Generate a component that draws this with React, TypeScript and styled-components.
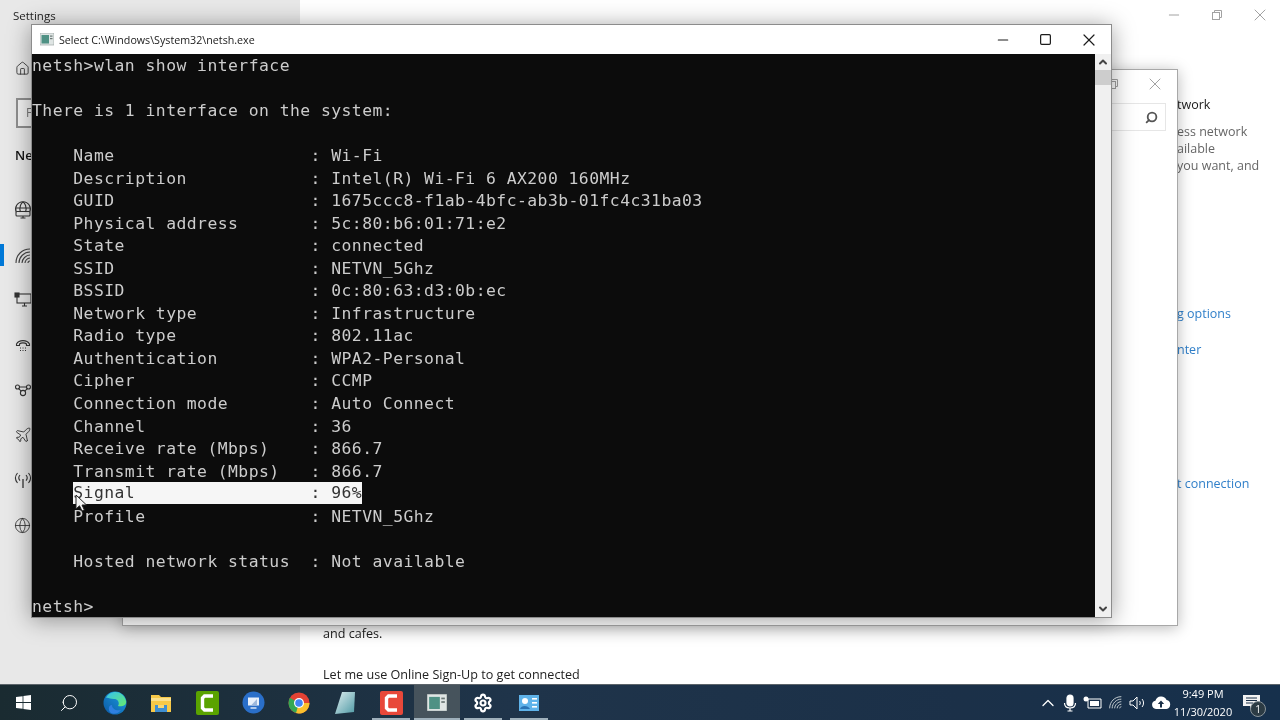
import React from 'react';
import styled, { createGlobalStyle } from 'styled-components';
import { Search, Settings as SettingsGlyph, Plane, Globe, Home, ChevronUp, Minus, Square, X } from 'lucide-react';

const GlobalStyle = createGlobalStyle`
  html, body {
    margin: 0;
    padding: 0;
    background: #fff;
    overflow: hidden;
  }
  * { box-sizing: border-box; }
`;

const uiFont = `"Open Sans", "Noto Sans", "Liberation Sans", sans-serif`;

const Desktop = styled.div`
  position: relative;
  width: 1280px;
  height: 720px;
  overflow: hidden;
  display: flex;
  flex-direction: column;
  font-family: ${uiFont};
  filter: blur(0.35px);
`;

/* settings window behind everything */
const SettingsWindow = styled.div`
  flex: 1;
  display: flex;
  min-height: 0;
  background: #fff;
`;

const Sidebar = styled.aside`
  width: 300px;
  background: #e8e8e8;
  display: flex;
  flex-direction: column;
`;

const AppTitle = styled.div`
  padding: 8px 0 0 13px;
  height: 52px;
  font-size: 11.5px;
  color: #222;
`;

const SideIconRow = styled.div<{ $active?: boolean; $nudge?: number }>`
  position: relative;
  height: 45px;
  display: flex;
  align-items: center;
  padding-left: 14px;
  padding-top: ${({ $nudge }) => $nudge ?? 0}px;
  color: #333;
  &::before {
    content: '';
    display: ${({ $active }) => ($active ? 'block' : 'none')};
    position: absolute;
    left: 0;
    top: 12px;
    width: 4px;
    height: 22px;
    background: #0078d7;
  }
`;

const HomeRow = styled(SideIconRow)`
  height: 32px;
  padding-left: 15px;
`;

const SearchBox = styled.div`
  margin: 14px 0 0 16px;
  width: 120px;
  height: 30px;
  border: 2px solid #8f8f8f;
  background: #f2f2f2;
  padding-left: 8px;
  font-size: 12px;
  line-height: 26px;
  color: #777;
`;

const SectionHead = styled.div`
  padding: 18px 0 0 15px;
  height: 59px;
  font-size: 13px;
  font-weight: 600;
  color: #111;
`;

const Content = styled.main`
  flex: 1;
  display: flex;
  flex-direction: column;
`;

const WindowControls = styled.div`
  height: 30px;
  display: flex;
  justify-content: flex-end;
  margin-right: -1px;
`;

const ControlSlot = styled.div`
  width: 43px;
  display: flex;
  align-items: center;
  justify-content: center;
  color: #a2a2a2;
`;

const ContentBody = styled.div`
  flex: 1;
  display: flex;
`;

const MainColumn = styled.div`
  width: 877px;
  padding-left: 23px;
  display: flex;
  flex-direction: column;
  justify-content: flex-end;
  gap: 23px;
  font-size: 12.6px;
  line-height: 18px;
  color: #222;
`;

const Rail = styled.div`
  flex: 1;
  display: flex;
  flex-direction: column;
  font-size: 12.5px;
  white-space: nowrap;
`;

const RailLine = styled.div<{ $tone?: 'head' | 'link' | 'body'; $gap?: number }>`
  height: 17px;
  line-height: 17px;
  margin-top: ${({ $gap }) => $gap ?? 0}px;
  color: ${({ $tone }) => ($tone === 'head' ? '#1c1c1c' : $tone === 'link' ? '#2f7fc9' : '#666')};
`;

/* floating windows */
const DialogWindow = styled.div`
  position: absolute;
  left: 122px;
  top: 69px;
  width: 1056px;
  height: 557px;
  background: #fff;
  border: 1px solid #a8a8a8;
  box-shadow: 0 2px 14px rgba(0, 0, 0, 0.28);
  display: flex;
  flex-direction: column;
  align-items: flex-end;
`;

const DialogTop = styled.div`
  display: flex;
  height: 28px;
  padding-right: 1px;
  color: #a2a2a2;
`;

const DialogSlot = styled.div`
  width: 42px;
  display: flex;
  align-items: center;
  justify-content: center;
`;

const DialogSearch = styled.div`
  margin: 5px 11px 0 0;
  width: 100px;
  height: 28px;
  border: 1px solid #e6e6e6;
  display: flex;
  align-items: center;
  justify-content: flex-end;
  padding-right: 7px;
  color: #555;
`;

const ConsoleWindow = styled.div`
  position: absolute;
  left: 31px;
  top: 24px;
  width: 1081px;
  height: 594px;
  background: #fff;
  border: 1px solid #8c8c8c;
  box-shadow: 0 2px 22px rgba(0, 0, 0, 0.38);
  display: flex;
  flex-direction: column;
`;

const ConsoleTitleBar = styled.header`
  height: 29px;
  flex: none;
  display: flex;
  align-items: center;
  padding-left: 8px;
  background: #fff;
`;

const ConsoleTitle = styled.span`
  margin-left: 5px;
  flex: 1;
  font-size: 10.7px;
  color: #1a1a1a;
`;

const TitleButton = styled.div`
  width: 43px;
  height: 100%;
  display: flex;
  align-items: center;
  justify-content: center;
  color: #1c1c1c;
`;

const TitleButtons = styled.div`
  height: 100%;
  display: flex;
  margin-right: 1px;
`;

const ConsoleBody = styled.div`
  flex: 1;
  min-height: 0;
  display: flex;
`;

const Screen = styled.pre`
  flex: 1;
  margin: 0;
  padding-top: 1px;
  background: #0c0c0c;
  color: #cccccc;
  font-family: "DejaVu Sans Mono", "Liberation Mono", monospace;
  font-size: 16.4px;
  letter-spacing: 0.45px;
  overflow: hidden;
`;

const Line = styled.div`
  height: 22.54px;
  line-height: 22.54px;
  white-space: pre;
`;

const Selected = styled.span`
  display: inline-block;
  position: relative;
  top: -1px;
  height: 22px;
  background: #f6f6f6;
  color: #333;
`;

const Scrollbar = styled.div`
  width: 16px;
  background: #f0f0f0;
  display: flex;
  flex-direction: column;
  align-items: center;
  color: #444;
`;

const ScrollArrow = styled.div`
  width: 100%;
  height: 16px;
  display: flex;
  align-items: center;
  justify-content: center;
`;

const ScrollThumb = styled.div`
  width: 100%;
  height: 15px;
  background: #cdcdcd;
  margin-bottom: auto;
`;

const Pointer = styled.svg`
  position: absolute;
  left: 75px;
  top: 494px;
`;

/* taskbar */
const Taskbar = styled.footer`
  height: 36px;
  flex: none;
  display: flex;
  align-items: stretch;
  background: linear-gradient(90deg, #1a2b31 0%, #1f344a 40%, #1b3048 75%, #16304c 100%);
  border-top: 1px solid #5c646a;
`;

const TaskButton = styled.div<{ $active?: boolean; $running?: boolean }>`
  position: relative;
  width: 46px;
  display: flex;
  align-items: center;
  justify-content: center;
  background: ${({ $active }) => ($active ? '#46535c' : 'transparent')};
  color: #fff;
  &::after {
    content: '';
    display: ${({ $running, $active }) => ($running || $active ? 'block' : 'none')};
    position: absolute;
    left: ${({ $active }) => ($active ? '0' : '4px')};
    right: ${({ $active }) => ($active ? '0' : '4px')};
    bottom: 0;
    height: 2px;
    background: #9fb0bb;
  }
`;

const Tray = styled.div`
  margin-left: auto;
  display: flex;
  align-items: center;
  color: #fff;
`;

const TrayIcon = styled.div<{ $w: number }>`
  width: ${({ $w }) => $w}px;
  display: flex;
  align-items: center;
  justify-content: center;
`;

const Clock = styled.div`
  width: 60px;
  margin-right: 7px;
  display: flex;
  flex-direction: column;
  align-items: center;
  font-size: 11px;
  line-height: 18px;
  color: #fff;
`;

const NotifyWrap = styled.div`
  position: relative;
  width: 40px;
  height: 100%;
  display: flex;
  align-items: center;
  padding-left: 3px;
`;

const NotifyBadge = styled.span`
  position: absolute;
  left: 10px;
  top: 16px;
  width: 16px;
  height: 16px;
  border-radius: 50%;
  background: #2c3b44;
  border: 1px solid #8a949a;
  font-size: 10px;
  line-height: 14px;
  text-align: center;
  color: #fff;
`;

const rows: [string, string][] = [
  ['Name', 'Wi-Fi'],
  ['Description', 'Intel(R) Wi-Fi 6 AX200 160MHz'],
  ['GUID', '1675ccc8-f1ab-4bfc-ab3b-01fc4c31ba03'],
  ['Physical address', '5c:80:b6:01:71:e2'],
  ['State', 'connected'],
  ['SSID', 'NETVN_5Ghz'],
  ['BSSID', '0c:80:63:d3:0b:ec'],
  ['Network type', 'Infrastructure'],
  ['Radio type', '802.11ac'],
  ['Authentication', 'WPA2-Personal'],
  ['Cipher', 'CCMP'],
  ['Connection mode', 'Auto Connect'],
  ['Channel', '36'],
  ['Receive rate (Mbps)', '866.7'],
  ['Transmit rate (Mbps)', '866.7'],
  ['Signal', '96%'],
  ['Profile', 'NETVN_5Ghz'],
];

const field = (label: string, value: string) => `${label.padEnd(23)}: ${value}`;

const ConsoleIcon = ({ size = 14 }: { size?: number }) => (
  <svg width={size} height={size * 0.86} viewBox="0 0 14 12">
    <rect width="14" height="12" fill="#dfe5e4" stroke="#8f9a98" strokeWidth="0.6" />
    <rect x="1.5" y="2" width="7.5" height="8.5" fill="#4f9184" />
    <rect x="10" y="2.5" width="2.5" height="1.2" fill="#6b7775" />
    <rect x="10" y="5" width="2.5" height="1.2" fill="#6b7775" />
  </svg>
);

const RestoreIcon = () => (
  <svg width="10" height="10" viewBox="0 0 10 10" fill="none" stroke="currentColor" strokeWidth="1">
    <path d="M2.5 2.5V.5h7v7h-2" />
    <rect x=".5" y="2.5" width="7" height="7" />
  </svg>
);

const WifiArcs = ({ color = '#444', size = 18 }: { color?: string; size?: number }) => (
  <svg width={size} height={size} viewBox="0 0 18 18" fill="none" stroke={color} strokeWidth="1.1">
    <path d="M2 16C2 8 8 2 16 2" />
    <path d="M5 16C5 10 10 5 16 5" />
    <path d="M8 16C8 12 12 8 16 8" />
    <path d="M11 16C11 14 13 11 16 11" />
    <path d="M14 16C14 15 15 14 16 14" />
  </svg>
);

const GlobeScreen = () => (
  <svg width="18" height="18" viewBox="0 0 18 18" fill="none" stroke="#333" strokeWidth="1.1">
    <path d="M2.2 11A7.4 7.4 0 1 1 15.8 11" />
    <path d="M6.4 11C5 6 7 2 9 1M11.6 11C13 6 11 2 9 1M1.8 7h14.4" />
    <rect x="2" y="10.5" width="14" height="4.5" rx="1" />
    <path d="M6.5 17h5M9 15v2" />
  </svg>
);

const WiredPc = () => (
  <svg width="18" height="18" viewBox="0 0 18 18" fill="none" stroke="#333" strokeWidth="1.1">
    <rect x="3" y="3" width="14" height="9" />
    <path d="M8 15h5M10.5 12v3" />
    <rect x="1" y="2" width="4" height="4" fill="#333" />
  </svg>
);

const DialUp = () => (
  <svg width="18" height="18" viewBox="0 0 18 18" fill="none" stroke="#333" strokeWidth="1.1">
    <path d="M2.5 8C5 3.5 13 3.5 15.5 8v1.5h-3V8C11 6.5 7 6.5 5.5 8v1.5h-3z" />
    <path d="M6 12h1M8.5 12h1M11 12h1M6 14.5h1M8.5 14.5h1M11 14.5h1" />
  </svg>
);

const VpnNodes = () => (
  <svg width="18" height="18" viewBox="0 0 18 18" fill="none" stroke="#333" strokeWidth="1.1">
    <circle cx="3.5" cy="6" r="2" />
    <circle cx="14.5" cy="6" r="2" />
    <circle cx="9" cy="12" r="2.6" />
    <path d="M5.5 6h7M4.8 7.6 7 10M13.2 7.6 11 10" />
  </svg>
);

const Hotspot = () => (
  <svg width="18" height="18" viewBox="0 0 18 18" fill="none" stroke="#333" strokeWidth="1.1">
    <path d="M9 8v9" strokeWidth="1.3" />
    <path d="M6 4c-1.4 1.6-1.4 4 0 5.6M12 4c1.4 1.6 1.4 4 0 5.6" />
    <path d="M3.5 2C1 5 1 9 3.5 12M14.5 2C17 5 17 9 14.5 12" />
  </svg>
);

const WindowsLogo = () => (
  <svg width="15" height="15" viewBox="0 0 15 15" fill="#fff">
    <path d="M0 2.1 6.6 1.2V7H0zM7.4 1.1 15 0v7H7.4zM0 7.9h6.6v5.9L0 12.9zM7.4 7.9H15V15l-7.6-1.1z" />
  </svg>
);

const EdgeIcon = () => (
  <svg width="24" height="24" viewBox="0 0 24 24">
    <defs>
      <linearGradient id="edgeA" x1="0" y1="1" x2="1" y2="0">
        <stop offset="0" stopColor="#0c59a4" />
        <stop offset="1" stopColor="#1b9de2" />
      </linearGradient>
      <linearGradient id="edgeB" x1="0" y1="0" x2="1" y2="1">
        <stop offset="0" stopColor="#35c1f1" />
        <stop offset="1" stopColor="#66eb6e" />
      </linearGradient>
    </defs>
    <circle cx="12" cy="12" r="11.5" fill="url(#edgeA)" />
    <path d="M3 7C6-1 20-2 23 10c1 5-5 6-8 5 2-3 0-7-4-7S5 6 3 7z" fill="url(#edgeB)" />
    <path d="M9 14c0 4 4 6 9 5-2 3-7 5-10 3-3-2-3-8 1-8z" fill="#2f7fe0" />
  </svg>
);

const FolderIcon = () => (
  <svg width="22" height="20" viewBox="0 0 22 20">
    <path d="M1 2h8l2 2h10v15H1z" fill="#f7c948" />
    <rect x="1" y="5" width="20" height="3" fill="#fbe08a" />
    <rect x="5" y="12" width="12" height="7" fill="#3f8fd2" />
    <rect x="8" y="12" width="6" height="3" fill="#f7d774" />
  </svg>
);

const CamtasiaIcon = ({ color }: { color: string }) => (
  <svg width="23" height="24" viewBox="0 0 23 24">
    <rect width="23" height="24" rx="2" fill={color} />
    <path d="M17 5H8.5L6.5 7v10l2 2H17" fill="none" stroke="#fff" strokeWidth="3.4" />
  </svg>
);

const RemoteIcon = () => (
  <svg width="23" height="23" viewBox="0 0 23 23">
    <circle cx="11.5" cy="11.5" r="11" fill="#2a6fc9" />
    <path d="M6 6.5h11v8H6z" fill="#e8f0fa" />
    <path d="M9 14.5 15 8v6.5z" fill="#9db8dc" />
    <path d="M8.5 17h6" stroke="#e8f0fa" strokeWidth="1.4" />
  </svg>
);

const ChromeIcon = () => (
  <svg width="22" height="22" viewBox="0 0 22 22">
    <circle cx="11" cy="11" r="10.5" fill="#e44234" />
    <path d="M11 11 1.9 5.8A10.5 10.5 0 0 0 11 21.5z" fill="#34a853" />
    <path d="M11 11h10.5A10.5 10.5 0 0 1 8 21.1z" fill="#fbc02d" />
    <circle cx="11" cy="11" r="5" fill="#fff" />
    <circle cx="11" cy="11" r="3.8" fill="#4285f4" />
  </svg>
);

const GlassIcon = () => (
  <svg width="22" height="24" viewBox="0 0 22 24">
    <defs>
      <linearGradient id="glass" x1="0" y1="0" x2="1" y2="1">
        <stop offset="0" stopColor="#dfeef0" />
        <stop offset="1" stopColor="#4f9aa5" />
      </linearGradient>
    </defs>
    <path d="M8 1h13l-1 20-19 2z" fill="url(#glass)" />
  </svg>
);

const MonitorApp = () => (
  <svg width="20" height="16" viewBox="0 0 20 16">
    <rect width="20" height="16" fill="#5fb3ea" />
    <circle cx="6" cy="6" r="3" fill="#fff" />
    <path d="M1 14c1-4 8-4 10 0z" fill="#2a74b5" />
    <rect x="13" y="3" width="5" height="1.6" fill="#fff" />
    <rect x="13" y="7" width="5" height="1.6" fill="#fff" />
    <rect x="13" y="11" width="5" height="1.6" fill="#fff" />
  </svg>
);

const MicFilled = () => (
  <svg width="14" height="18" viewBox="0 0 14 18" fill="none" stroke="#fff" strokeWidth="1.2">
    <rect x="4" y="1" width="6" height="11" rx="3" fill="#fff" />
    <path d="M1.5 9c0 3.4 2.4 5 5.5 5s5.5-1.6 5.5-5M7 14v3M4.5 17h5" />
  </svg>
);

const BatteryPlug = () => (
  <svg width="19" height="13" viewBox="0 0 19 13" fill="#fff">
    <path d="M5 3h13v9H5z" fill="none" stroke="#fff" strokeWidth="1" />
    <rect x="7" y="5" width="9" height="5" />
    <circle cx="3" cy="3" r="2.5" />
  </svg>
);

const Speaker = () => (
  <svg width="18" height="14" viewBox="0 0 18 14" fill="none" stroke="#fff" strokeWidth="1">
    <path d="M1 5h3l4-4v12L4 9H1z" />
    <path d="M10.5 5c1 1.2 1 2.8 0 4M13 3c2 2.4 2 5.6 0 8" />
  </svg>
);

const CloudUp = () => (
  <svg width="20" height="14" viewBox="0 0 20 14">
    <path d="M5 13a4.2 4.2 0 0 1-.6-8.3A6 6 0 0 1 15.6 4 4.6 4.6 0 0 1 15.5 13z" fill="#fff" />
    <path d="M10 4.5 6.8 8h2.2v3.5h2V8h2.2z" fill="#1b3048" />
  </svg>
);

const NoteIcon = () => (
  <svg width="17" height="15" viewBox="0 0 17 15">
    <path d="M0 0h17v11h-7l-3 3v-3H0z" fill="#f2f2f2" />
    <path d="M3 3h11M3 5.5h11M3 8h7" stroke="#1b3048" strokeWidth="1" />
  </svg>
);

export default function App() {
  return (
    <>
      <GlobalStyle />
      <Desktop>
        <SettingsWindow>
          <Sidebar>
            <AppTitle>Settings</AppTitle>
            <HomeRow>
              <Home size={15} strokeWidth={1.4} />
            </HomeRow>
            <SearchBox>F</SearchBox>
            <SectionHead>Ne</SectionHead>
            <SideIconRow><GlobeScreen /></SideIconRow>
            <SideIconRow $active $nudge={2}><WifiArcs /></SideIconRow>
            <SideIconRow><WiredPc /></SideIconRow>
            <SideIconRow><DialUp /></SideIconRow>
            <SideIconRow><VpnNodes /></SideIconRow>
            <SideIconRow><Plane size={18} strokeWidth={1.2} /></SideIconRow>
            <SideIconRow><Hotspot /></SideIconRow>
            <SideIconRow $nudge={2}><Globe size={17} strokeWidth={1.2} /></SideIconRow>
          </Sidebar>
          <Content>
            <WindowControls>
              <ControlSlot><Minus size={16} strokeWidth={1} absoluteStrokeWidth /></ControlSlot>
              <ControlSlot><RestoreIcon /></ControlSlot>
              <ControlSlot><X size={20} strokeWidth={1} absoluteStrokeWidth /></ControlSlot>
            </WindowControls>
            <ContentBody>
              <MainColumn>
                <div>and cafes.</div>
                <div>Let me use Online Sign-Up to get connected</div>
              </MainColumn>
              <Rail>
                <RailLine $tone="head" $gap={66}>twork</RailLine>
                <RailLine $gap={10}>ess network</RailLine>
                <RailLine>ailable</RailLine>
                <RailLine>you want, and</RailLine>
                <RailLine $tone="link" $gap={131}>g options</RailLine>
                <RailLine $tone="link" $gap={19}>nter</RailLine>
                <RailLine $tone="link" $gap={117}>t connection</RailLine>
              </Rail>
            </ContentBody>
          </Content>
        </SettingsWindow>

        <DialogWindow>
          <DialogTop>
            <DialogSlot><RestoreIcon /></DialogSlot>
            <DialogSlot><X size={20} strokeWidth={1} absoluteStrokeWidth /></DialogSlot>
          </DialogTop>
          <DialogSearch><Search size={13} strokeWidth={1.8} absoluteStrokeWidth style={{ transform: 'scaleX(-1)' }} /></DialogSearch>
        </DialogWindow>

        <ConsoleWindow>
          <ConsoleTitleBar>
            <ConsoleIcon />
            <ConsoleTitle>Select C:\Windows\System32\netsh.exe</ConsoleTitle>
            <TitleButtons>
              <TitleButton><Minus size={16} strokeWidth={1.2} absoluteStrokeWidth /></TitleButton>
              <TitleButton><Square size={13} strokeWidth={1.2} absoluteStrokeWidth /></TitleButton>
              <TitleButton><X size={20} strokeWidth={1.2} absoluteStrokeWidth /></TitleButton>
            </TitleButtons>
          </ConsoleTitleBar>
          <ConsoleBody>
            <Screen>
              <Line>netsh&gt;wlan show interface</Line>
              <Line> </Line>
              <Line>There is 1 interface on the system:</Line>
              <Line> </Line>
              {rows.map(([label, value]) =>
                label === 'Signal' ? (
                  <Line key={label}>{'    '}<Selected>{field(label, value)}</Selected></Line>
                ) : (
                  <Line key={label}>{'    ' + field(label, value)}</Line>
                ),
              )}
              <Line> </Line>
              <Line>{'    ' + field('Hosted network status', 'Not available')}</Line>
              <Line> </Line>
              <Line>netsh&gt;</Line>
            </Screen>
            <Scrollbar>
              <ScrollArrow><ChevronUp size={12} strokeWidth={2} absoluteStrokeWidth /></ScrollArrow>
              <ScrollThumb />
              <ScrollArrow><ChevronUp size={12} strokeWidth={2} absoluteStrokeWidth style={{ transform: 'rotate(180deg)' }} /></ScrollArrow>
            </Scrollbar>
          </ConsoleBody>
        </ConsoleWindow>

        <Pointer width="12" height="18" viewBox="0 0 12 18">
          <path d="M1 1v14l3.5-3.2L7 17l2.4-1-2.4-5h4.5z" fill="#f4f4f4" stroke="#222" strokeWidth="1" />
        </Pointer>

        <Taskbar>
          <TaskButton><WindowsLogo /></TaskButton>
          <TaskButton><Search size={20} strokeWidth={1.2} style={{ transform: 'scaleX(-1)' }} /></TaskButton>
          <TaskButton><EdgeIcon /></TaskButton>
          <TaskButton><FolderIcon /></TaskButton>
          <TaskButton><CamtasiaIcon color="#5aa300" /></TaskButton>
          <TaskButton><RemoteIcon /></TaskButton>
          <TaskButton><ChromeIcon /></TaskButton>
          <TaskButton><GlassIcon /></TaskButton>
          <TaskButton $running><CamtasiaIcon color="#e8483a" /></TaskButton>
          <TaskButton $active><ConsoleIcon size={20} /></TaskButton>
          <TaskButton $running><SettingsGlyph size={20} strokeWidth={2.6} /></TaskButton>
          <TaskButton $running><MonitorApp /></TaskButton>
          <Tray>
            <TrayIcon $w={22}><ChevronUp size={20} strokeWidth={1.3} absoluteStrokeWidth /></TrayIcon>
            <TrayIcon $w={21}><MicFilled /></TrayIcon>
            <TrayIcon $w={24}><BatteryPlug /></TrayIcon>
            <TrayIcon $w={23}><WifiArcs color="#cfd6da" size={15} /></TrayIcon>
            <TrayIcon $w={22}><Speaker /></TrayIcon>
            <TrayIcon $w={24}><CloudUp /></TrayIcon>
            <Clock>
              <span>9:49 PM</span>
              <span>11/30/2020</span>
            </Clock>
            <NotifyWrap>
              <NoteIcon />
              <NotifyBadge>1</NotifyBadge>
            </NotifyWrap>
          </Tray>
        </Taskbar>
      </Desktop>
    </>
  );
}
